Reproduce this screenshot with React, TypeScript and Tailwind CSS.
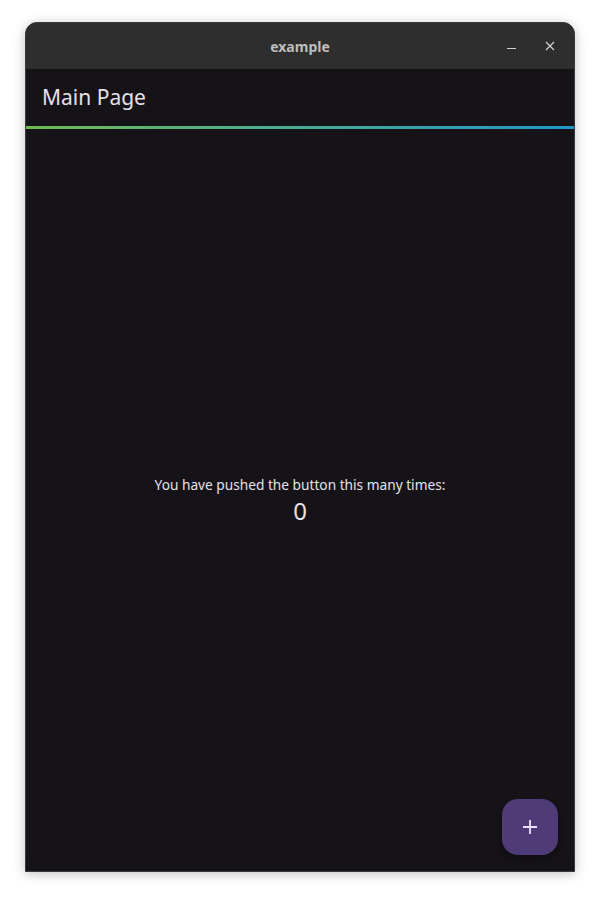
import { useState } from "react";

export default function App() {
  const [count, setCount] = useState(0);

  return (
    <main
      className="min-h-[900px] w-[600px] bg-white pt-[22px] pl-[25px]"
      style={{ fontFamily: '"Noto Sans", "Open Sans", sans-serif' }}
    >
      <div className="flex h-[850px] w-[550px] flex-col overflow-hidden rounded-t-[12px] border border-[#3a3a3a] bg-[#151318] shadow-[0_2px_12px_rgba(0,0,0,0.25)]">
        <header className="relative flex h-[46px] shrink-0 items-center justify-center bg-[#2e2e2e]">
          <span className="text-[14px] font-bold text-[#bdbdbd]">example</span>
          <div className="absolute right-[19px] top-0 flex h-full items-center gap-[29px]">
            <span className="mt-[5px] block h-[1px] w-[9px] bg-[#cfcfcf]" />
            <svg width="10" height="10" viewBox="0 0 10 10" className="text-[#cfcfcf]">
              <path d="M1 1L9 9M9 1L1 9" stroke="currentColor" strokeWidth="1.3" />
            </svg>
          </div>
        </header>

        <div className="flex h-[57px] shrink-0 items-center px-[16px]">
          <h1 className="text-[21px] font-normal text-[#e6e1e8]">Main Page</h1>
        </div>
        <div className="h-[3px] shrink-0 bg-gradient-to-r from-[#6cbb4c] to-[#2196c8]" />

        <section className="relative flex flex-1 flex-col items-center justify-center pt-[2px]">
          <p className="text-[13.7px] text-[#e6e1e8]">You have pushed the button this many times:</p>
          <p className="text-[24px] leading-[32px] text-[#e6e1e8]">{count}</p>

          <button
            type="button"
            onClick={() => setCount(count + 1)}
            className="absolute bottom-[16px] right-[16px] flex h-[56px] w-[56px] items-center justify-center rounded-[16px] bg-[#4f3b78] shadow-[0_3px_6px_rgba(0,0,0,0.4)]"
          >
            <svg width="16" height="16" viewBox="0 0 16 16" className="text-[#ece0ff]">
              <path d="M8 1V15M1 8H15" stroke="currentColor" strokeWidth="1.8" />
            </svg>
          </button>
        </section>
      </div>
    </main>
  );
}
